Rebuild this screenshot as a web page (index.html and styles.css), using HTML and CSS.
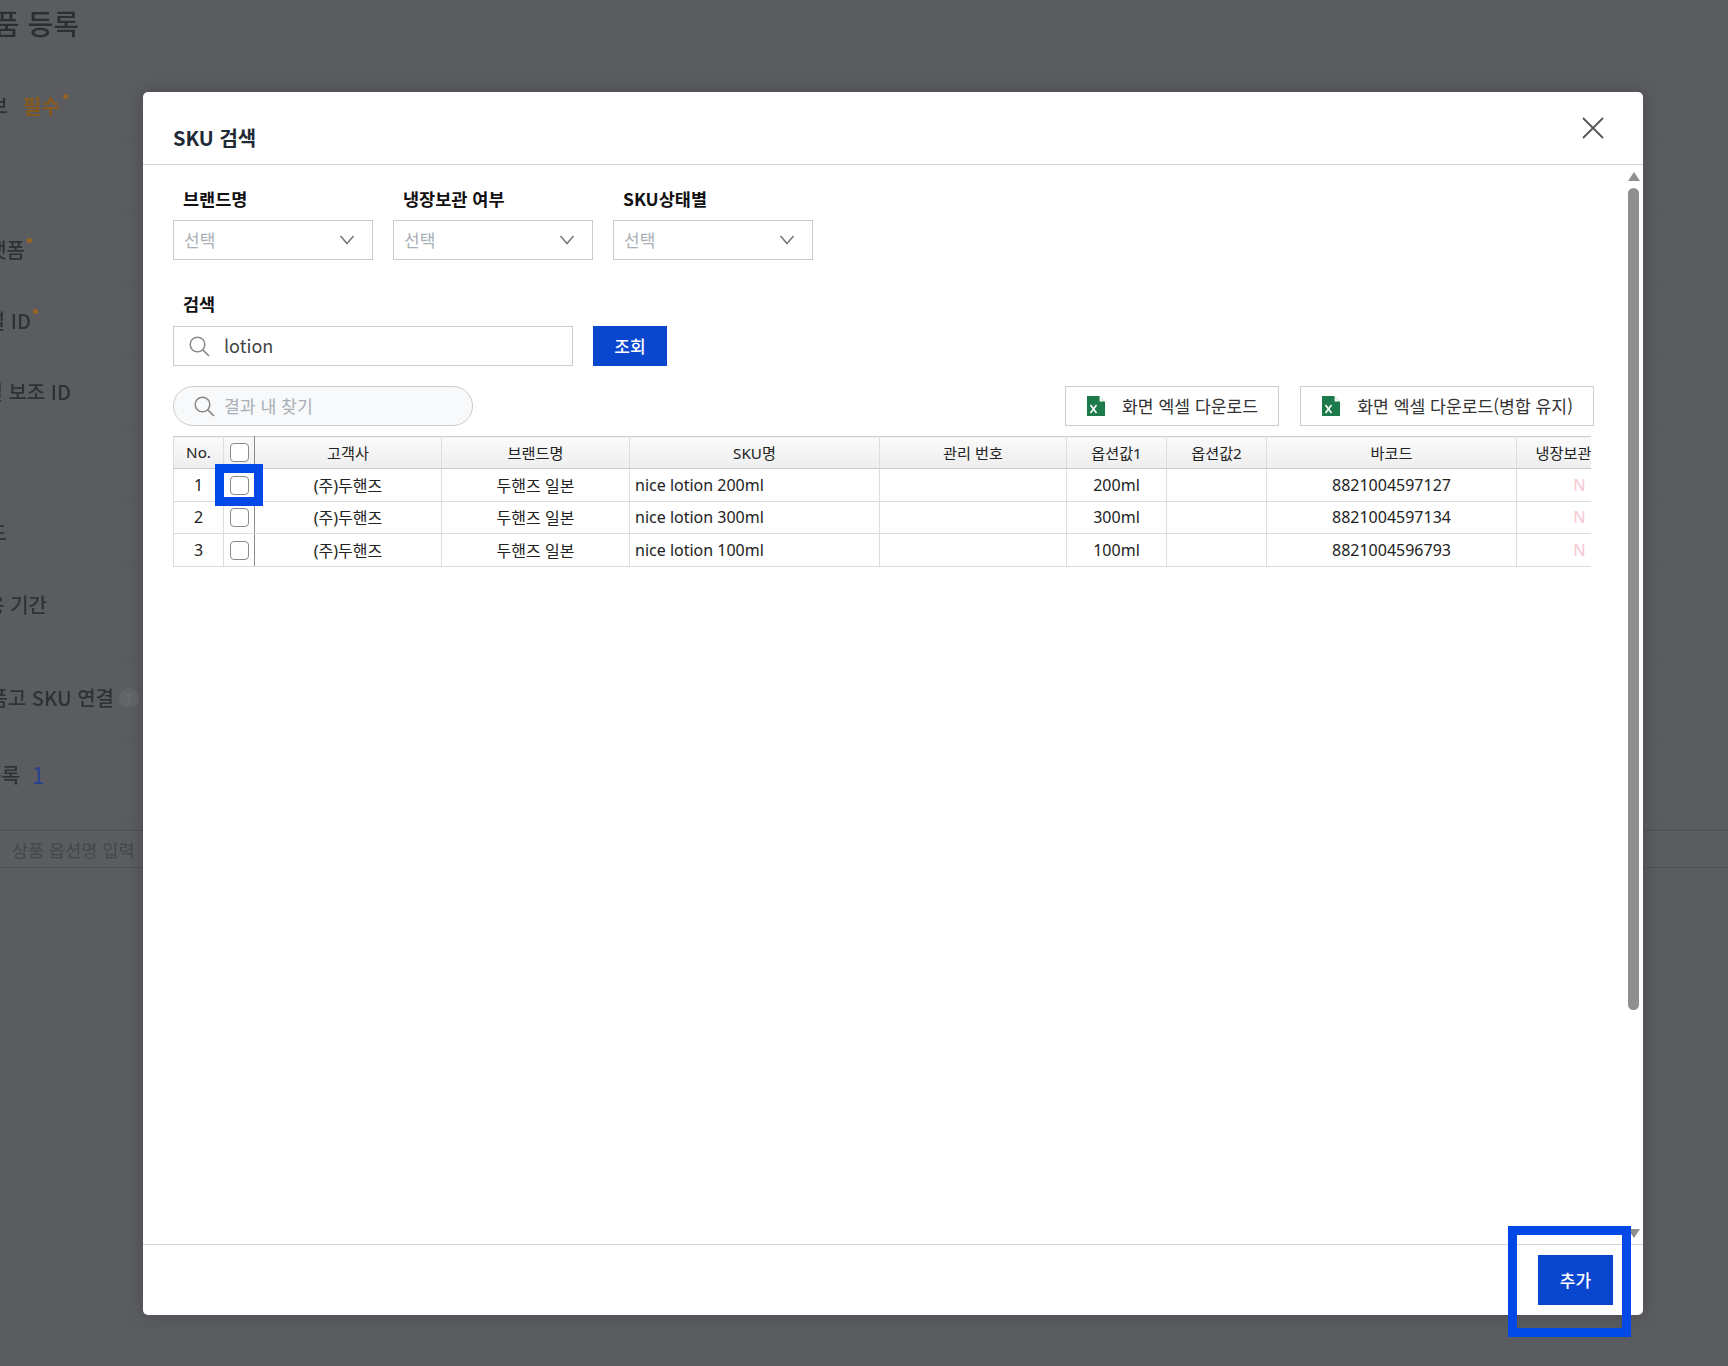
FILE: index.html
```html
<!DOCTYPE html>
<html lang="ko">
<head>
    <meta charset="UTF-8">
    <title>SKU 검색</title>
    <link rel="stylesheet" href="styles.css">
</head>
<body>
    <!-- 뒤쪽 상품 등록 화면 -->
    <div class="page">
        <div class="row"><div class="bg-label title w-title">상품 등록</div></div>
        <div class="row row-basic"><div class="bg-label w-basic">기본 정보</div><div class="required">필수<i class="star"></i></div></div>
        <div class="row"></div>
        <div class="row"><div class="bg-label w-platform">플랫폼<i class="star"></i></div></div>
        <div class="row"><div class="bg-label w-channel">채널 ID<i class="star"></i></div></div>
        <div class="row"><div class="bg-label w-sub">채널 보조 ID</div></div>
        <div class="row"></div>
        <div class="row"><div class="bg-label w-code">상품 코드</div></div>
        <div class="row row-top"><div class="bg-label w-period">적용 기간</div></div>
        <div class="row row-link"><div class="bg-label w-link">상품 품고 SKU 연결</div><span class="help">?</span></div>
        <div class="row row-list"><div class="bg-label list-label w-list">목록</div><span class="count">1</span></div>
        <div class="row"></div>
        <div class="row option-row"><div class="option-name">상품 옵션명 입력</div></div>
        <div class="row"></div>
    </div>

    <div class="modal">
        <div class="modal-header">
            <div class="modal-title">SKU 검색</div>
            <svg class="close" width="24" height="24" viewBox="0 0 24 24"><path d="M2 2L22 22M22 2L2 22" fill="none" stroke="#555" stroke-width="1.8"/></svg>
        </div>

        <div class="modal-body">
            <div class="filters">
                <div class="filter">
                    <div class="field-label">브랜드명</div>
                    <div class="select"><span>선택</span><svg width="16" height="10" viewBox="0 0 16 10"><path d="M1.5 1L8 8.5L14.5 1" fill="none" stroke="#777" stroke-width="1.5"/></svg></div>
                </div>
                <div class="filter">
                    <div class="field-label">냉장보관 여부</div>
                    <div class="select"><span>선택</span><svg width="16" height="10" viewBox="0 0 16 10"><path d="M1.5 1L8 8.5L14.5 1" fill="none" stroke="#777" stroke-width="1.5"/></svg></div>
                </div>
                <div class="filter">
                    <div class="field-label">SKU상태별</div>
                    <div class="select"><span>선택</span><svg width="16" height="10" viewBox="0 0 16 10"><path d="M1.5 1L8 8.5L14.5 1" fill="none" stroke="#777" stroke-width="1.5"/></svg></div>
                </div>
            </div>

            <div class="field-label search-label">검색</div>
            <div class="search-row">
                <div class="search-input">
                    <svg width="21" height="21" viewBox="0 0 21 21"><circle cx="8.5" cy="8.5" r="7.3" fill="none" stroke="#888" stroke-width="1.5"/><path d="M13.8 13.8L20 20" stroke="#888" stroke-width="1.7"/></svg>
                    <span>lotion</span>
                </div>
                <button class="btn-primary btn-search">조회</button>
            </div>

            <div class="tools">
                <div class="find-input">
                    <svg width="21" height="21" viewBox="0 0 21 21"><circle cx="8.5" cy="8.5" r="7.3" fill="none" stroke="#888" stroke-width="1.5"/><path d="M13.8 13.8L20 20" stroke="#888" stroke-width="1.7"/></svg>
                    <span>결과 내 찾기</span>
                </div>
                <div class="downloads">
                    <button class="btn-excel">
                        <svg width="18" height="20" viewBox="0 0 18 20"><path d="M0 0H12L18 6V20H0Z" fill="#1d7a4b"/><path d="M12.6 0.6L17.4 5.4H12.6Z" fill="#fff"/><path d="M3.5 9L9.5 17M9.5 9L3.5 17" stroke="#fff" stroke-width="1.6"/></svg>
                        <span>화면 엑셀 다운로드</span>
                    </button>
                    <button class="btn-excel">
                        <svg width="18" height="20" viewBox="0 0 18 20"><path d="M0 0H12L18 6V20H0Z" fill="#1d7a4b"/><path d="M12.6 0.6L17.4 5.4H12.6Z" fill="#fff"/><path d="M3.5 9L9.5 17M9.5 9L3.5 17" stroke="#fff" stroke-width="1.6"/></svg>
                        <span>화면 엑셀 다운로드(병합 유지)</span>
                    </button>
                </div>
            </div>

            <div class="grid-wrap">
                <table class="grid">
                    <thead>
                        <tr>
                            <th>No.</th>
                            <th><input type="checkbox" class="check"></th>
                            <th>고객사</th>
                            <th>브랜드명</th>
                            <th>SKU명</th>
                            <th>관리 번호</th>
                            <th>옵션값1</th>
                            <th>옵션값2</th>
                            <th>바코드</th>
                            <th>냉장보관</th>
                        </tr>
                    </thead>
                    <tbody>
                        <tr>
                            <td>1</td>
                            <td><input type="checkbox" class="check"></td>
                            <td>(주)두핸즈</td>
                            <td>두핸즈 일본</td>
                            <td class="left">nice lotion 200ml</td>
                            <td></td>
                            <td>200ml</td>
                            <td></td>
                            <td>8821004597127</td>
                            <td class="cold">N</td>
                        </tr>
                        <tr>
                            <td>2</td>
                            <td><input type="checkbox" class="check"></td>
                            <td>(주)두핸즈</td>
                            <td>두핸즈 일본</td>
                            <td class="left">nice lotion 300ml</td>
                            <td></td>
                            <td>300ml</td>
                            <td></td>
                            <td>8821004597134</td>
                            <td class="cold">N</td>
                        </tr>
                        <tr>
                            <td>3</td>
                            <td><input type="checkbox" class="check"></td>
                            <td>(주)두핸즈</td>
                            <td>두핸즈 일본</td>
                            <td class="left">nice lotion 100ml</td>
                            <td></td>
                            <td>100ml</td>
                            <td></td>
                            <td>8821004596793</td>
                            <td class="cold">N</td>
                        </tr>
                    </tbody>
                </table>
            </div>

            <div class="scrollbar">
                <div class="arrow-up"></div>
                <div class="thumb"></div>
                <div class="arrow-down"></div>
            </div>
        </div>

        <div class="modal-footer">
            <button class="btn-primary btn-add">추가</button>
        </div>
    </div>

    <!-- 가이드 강조 박스 -->
    <div class="mark mark-check"></div>
    <div class="mark mark-add"></div>
</body>
</html>
```

FILE: styles.css
```css
* {
    box-sizing: border-box;
}
html, body {
    margin: 0;
    height: 100%;
}
body {
    position: relative;
    width: 1728px;
    height: 1366px;
    overflow: hidden;
    background: #5a5c60;
    font-family: "Noto Sans CJK KR", "Noto Sans", sans-serif;
    color: #222;
}

/* background page */
.page {
    display: grid;
    grid-template-rows: 65px 78px 71px 71px 71px 71px 70px 71px 94px 75px 80px 13px 38px 458px;
    height: 1366px;
    filter: blur(0.3px);
}
.row {
    display: flex;
    align-items: center;
    border-bottom: 1px solid #57595d;
    color: #2f3135;
    font-size: 20px;
    font-weight: 500;
}
.row-basic {
    padding-top: 4px;
}
.row-top {
    align-items: flex-start;
    padding-top: 22px;
}
.row-link {
    padding-bottom: 3px;
}
.row-list {
    padding-bottom: 5px;
}
.bg-label {
    display: flex;
    justify-content: flex-end;
    align-items: center;
    flex-shrink: 0;
    white-space: nowrap;
    position: relative;
}
.title {
    color: #2c2e32;
    font-size: 28px;
    padding-bottom: 19px;
}
.w-title { width: 79px; }
.w-basic { width: 8px; }
.w-platform { width: 25px; }
.w-channel { width: 31px; }
.w-sub { width: 71px; }
.w-code { width: 7px; }
.w-period { width: 47px; }
.w-link { width: 114px; }
.w-list { width: 20px; }
.required {
    position: relative;
    margin-left: 15px;
    color: #875a20;
    font-weight: 700;
}
.star {
    position: absolute;
    top: 3px;
    right: -8px;
    width: 5px;
    height: 5px;
    border-radius: 50%;
    background: #9a6320;
}
.bg-label .star {
    right: -7px;
}
.help {
    display: flex;
    justify-content: center;
    align-items: center;
    width: 20px;
    height: 20px;
    margin-left: 5px;
    border-radius: 50%;
    background: #626468;
    color: #6e7074;
    font-size: 12px;
}
.count {
    margin-left: 12px;
    color: #2a4190;
    font-size: 23px;
    font-weight: 400;
}
.option-row {
    border-top: 1px solid #4f5155;
    border-bottom-color: #4f5155;
}
.option-name {
    margin-left: 12px;
    color: #45474b;
    font-size: 17.5px;
    font-weight: 400;
    white-space: nowrap;
}

/* modal */
.modal {
    position: absolute;
    left: 143px;
    top: 92px;
    display: flex;
    flex-direction: column;
    width: 1500px;
    height: 1223px;
    background: #fff;
    border-radius: 5px;
    box-shadow: 0 0 18px rgba(0, 0, 0, 0.18);
}
.modal-header {
    display: flex;
    justify-content: space-between;
    align-items: center;
    flex-shrink: 0;
    height: 73px;
    padding: 0 38px 0 30px;
    border-bottom: 1px solid #d2d4d6;
}
.modal-title {
    padding-top: 18px;
    color: #1f2a37;
    font-size: 20px;
    font-weight: 700;
}
.close {
    margin-bottom: 1px;
}
.modal-body {
    position: relative;
    flex: 1;
    padding: 22px 0 0 30px;
}
.modal-footer {
    display: flex;
    justify-content: flex-end;
    align-items: center;
    flex-shrink: 0;
    height: 71px;
    padding-right: 30px;
    border-top: 1px solid #d2d4d6;
}

/* filters */
.filters {
    display: flex;
    gap: 20px;
}
.filter {
    width: 200px;
}
.field-label {
    height: 24px;
    margin-bottom: 9px;
    padding-left: 10px;
    color: #111;
    font-size: 17.5px;
    font-weight: 700;
    line-height: 24px;
}
.select {
    display: flex;
    justify-content: space-between;
    align-items: center;
    height: 40px;
    padding: 0 17px 0 10px;
    border: 1px solid #ccc;
    color: #a9afb6;
    font-size: 17px;
}
.select span,
.search-input span,
.find-input span,
.btn-excel span {
    margin-bottom: 2px;
}
.search-label {
    margin-top: 32px;
    margin-bottom: 10px;
}
.search-row {
    display: flex;
    gap: 20px;
}
.search-input {
    display: flex;
    align-items: center;
    gap: 14px;
    width: 400px;
    height: 40px;
    padding-left: 15px;
    border: 1px solid #ccc;
    color: #444;
    font-size: 18px;
}
.btn-primary {
    padding: 0 0 2px;
    border: none;
    background: #0a47cf;
    color: #fff;
    font-family: inherit;
    font-size: 17px;
    font-weight: 500;
}
.btn-search {
    width: 74px;
    height: 40px;
}
.btn-add {
    width: 75px;
    height: 50px;
}
.tools {
    display: flex;
    justify-content: space-between;
    width: 1421px;
    margin-top: 20px;
}
.find-input {
    display: flex;
    align-items: center;
    gap: 9px;
    width: 300px;
    height: 40px;
    padding-left: 20px;
    border: 1px solid #ccc;
    border-radius: 20px;
    background: #f8f9fa;
    color: #a9afb6;
    font-size: 17.2px;
}
.downloads {
    display: flex;
    gap: 21px;
}
.btn-excel {
    display: flex;
    align-items: center;
    gap: 17px;
    height: 40px;
    padding: 0 20px 0 21px;
    border: 1px solid #ccc;
    background: #fff;
    color: #333;
    font-family: inherit;
    font-size: 17.2px;
}

/* result table */
.grid-wrap {
    width: 1418px;
    margin-top: 10px;
    overflow: hidden;
}
.grid {
    width: 1443px;
    table-layout: fixed;
    border-collapse: collapse;
    font-family: "Noto Sans", "Noto Sans CJK KR", sans-serif;
    font-size: 16px;
}
.grid th {
    height: 32px;
    padding: 0 0 2px;
    border: 1px solid #ddd;
    border-top-color: #ccc;
    border-bottom-color: #ccc;
    background: linear-gradient(#fafafa, #eeeeee);
    color: #222;
    font-size: 15.2px;
    font-weight: 400;
    white-space: nowrap;
}
.grid td {
    height: 33px;
    padding: 0 0 1px;
    border: 1px solid #ddd;
    text-align: center;
    white-space: nowrap;
}
.grid tbody tr:nth-child(2) td {
    height: 32px;
}
.grid th:nth-child(1) { width: 50px; }
.grid th:nth-child(2) { width: 31px; }
.grid th:nth-child(3) { width: 187px; }
.grid th:nth-child(4) { width: 188px; }
.grid th:nth-child(5) { width: 250px; }
.grid th:nth-child(6) { width: 187px; }
.grid th:nth-child(7) { width: 100px; }
.grid th:nth-child(8) { width: 100px; }
.grid th:nth-child(9) { width: 250px; }
.grid th:nth-child(10) {
    width: 100px;
    padding-right: 6px;
}
.grid th:nth-child(2),
.grid td:nth-child(2) {
    padding: 0;
    border-right: 1px solid #8a8a8a;
}
.grid td.left {
    padding-left: 5px;
    text-align: left;
}
.grid td.cold {
    padding-left: 26px;
    color: #f8ccd7;
    font-weight: 500;
}
.check {
    display: block;
    width: 19px;
    height: 19px;
    margin: 0 auto;
    border: 1px solid #8a8a8a;
    border-radius: 4px;
    background: #fff;
    appearance: none;
}

/* scrollbar */
.scrollbar {
    position: absolute;
    top: 7px;
    right: 3px;
    display: flex;
    flex-direction: column;
    align-items: center;
    width: 13px;
    height: 1066px;
}
.arrow-up {
    border-left: 6px solid transparent;
    border-right: 6px solid transparent;
    border-bottom: 9px solid #8f8f8f;
}
.thumb {
    width: 11px;
    height: 822px;
    margin-top: 7px;
    border-radius: 6px;
    background: #8f8f8f;
}
.arrow-down {
    margin-top: auto;
    border-left: 6px solid transparent;
    border-right: 6px solid transparent;
    border-top: 9px solid #8f8f8f;
}

/* guide marks */
.mark {
    position: absolute;
    border: 9px solid #0049e6;
}
.mark-check {
    left: 215px;
    top: 464px;
    width: 48px;
    height: 42px;
}
.mark-add {
    left: 1508px;
    top: 1226px;
    width: 123px;
    height: 111px;
}
```
